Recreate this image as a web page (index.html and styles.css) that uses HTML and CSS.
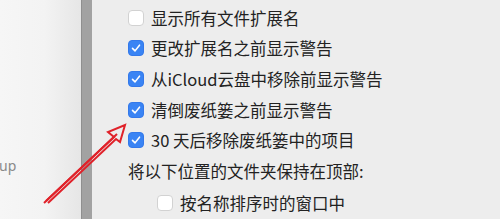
FILE: index.html
```html
<!DOCTYPE html>
<html lang="zh">
<head>
<meta charset="utf-8">
<link rel="stylesheet" href="styles.css">
</head>
<body>
<div class="screen">
  <aside class="sidebar">
    <span class="sidebar-text">up</span>
  </aside>
  <div class="divider"></div>
  <main class="prefs">
    <div class="row"><span class="box"></span><span class="label">显示所有文件扩展名</span></div>
    <div class="row"><span class="box checked"><svg viewBox="0 0 16 16"><path d="M4 8.4 L6.9 11.3 L12 4.8" /></svg></span><span class="label">更改扩展名之前显示警告</span></div>
    <div class="row"><span class="box checked"><svg viewBox="0 0 16 16"><path d="M4 8.4 L6.9 11.3 L12 4.8" /></svg></span><span class="label">从iCloud云盘中移除前显示警告</span></div>
    <div class="row"><span class="box checked"><svg viewBox="0 0 16 16"><path d="M4 8.4 L6.9 11.3 L12 4.8" /></svg></span><span class="label">清倒废纸篓之前显示警告</span></div>
    <div class="row"><span class="box checked"><svg viewBox="0 0 16 16"><path d="M4 8.4 L6.9 11.3 L12 4.8" /></svg></span><span class="label">30 天后移除废纸篓中的项目</span></div>
    <div class="row"><span class="label">将以下位置的文件夹保持在顶部:</span></div>
    <div class="row indent"><span class="box"></span><span class="label">按名称排序时的窗口中</span></div>
  </main>
  <svg class="arrow" viewBox="0 0 500 219" width="500" height="219">
    <path d="M44 203 L117 134" />
    <path d="M46 201 L114 137 L108 132 L125 125 L120 142 L116 139 L48 203" />
  </svg>
</div>
</body>
</html>
```

FILE: styles.css
```css
html, body {
  margin: 0;
  padding: 0;
}
body {
  width: 500px;
  height: 219px;
  overflow: hidden;
  background: #ececec;
  font-family: "Noto Sans CJK SC", "Noto Sans", sans-serif;
}
.screen {
  position: relative;
  display: flex;
  width: 500px;
  height: 219px;
}
.sidebar {
  width: 81px;
  flex: none;
  background: linear-gradient(to right, #f6f6f6 0%, #f3f3f3 55%, #e6e6e6 100%);
  display: flex;
  align-items: flex-start;
  padding-top: 157px;
  box-sizing: border-box;
}
.sidebar-text {
  font-family: "Noto Sans", sans-serif;
  font-size: 14px;
  color: #8a8a8a;
  margin-left: -1px;
  line-height: 18px;
}
.divider {
  width: 11px;
  flex: none;
  background: #a2a2a2;
  border-left: 1px solid #8f8f8f;
  box-sizing: border-box;
}
.prefs {
  flex: 1;
  padding-left: 36px;
  padding-top: 2.5px;
  background: #ededed;
}
.row {
  height: 30.6px;
  display: flex;
  align-items: center;
  gap: 7px;
}
.row.indent {
  padding-left: 29px;
  margin-top: 1.5px;
}
.label {
  font-size: 16.5px;
  color: #222222;
  white-space: nowrap;
  line-height: 20px;
}
.box {
  width: 16px;
  height: 16px;
  box-sizing: border-box;
  border-radius: 4px;
  background: #ffffff;
  border: 1px solid #d2d2d2;
  flex: none;
  display: flex;
}
.box.checked {
  background: #3a84f4;
  border-color: #3479ea;
}
.box svg {
  width: 14px;
  height: 14px;
  fill: none;
  stroke: #ffffff;
  stroke-width: 1.8;
  stroke-linecap: round;
  stroke-linejoin: round;
}
.arrow {
  position: absolute;
  left: 0;
  top: 0;
  pointer-events: none;
}
.arrow path {
  fill: none;
  stroke: #e0222a;
  stroke-width: 2;
  stroke-linejoin: miter;
}
```
